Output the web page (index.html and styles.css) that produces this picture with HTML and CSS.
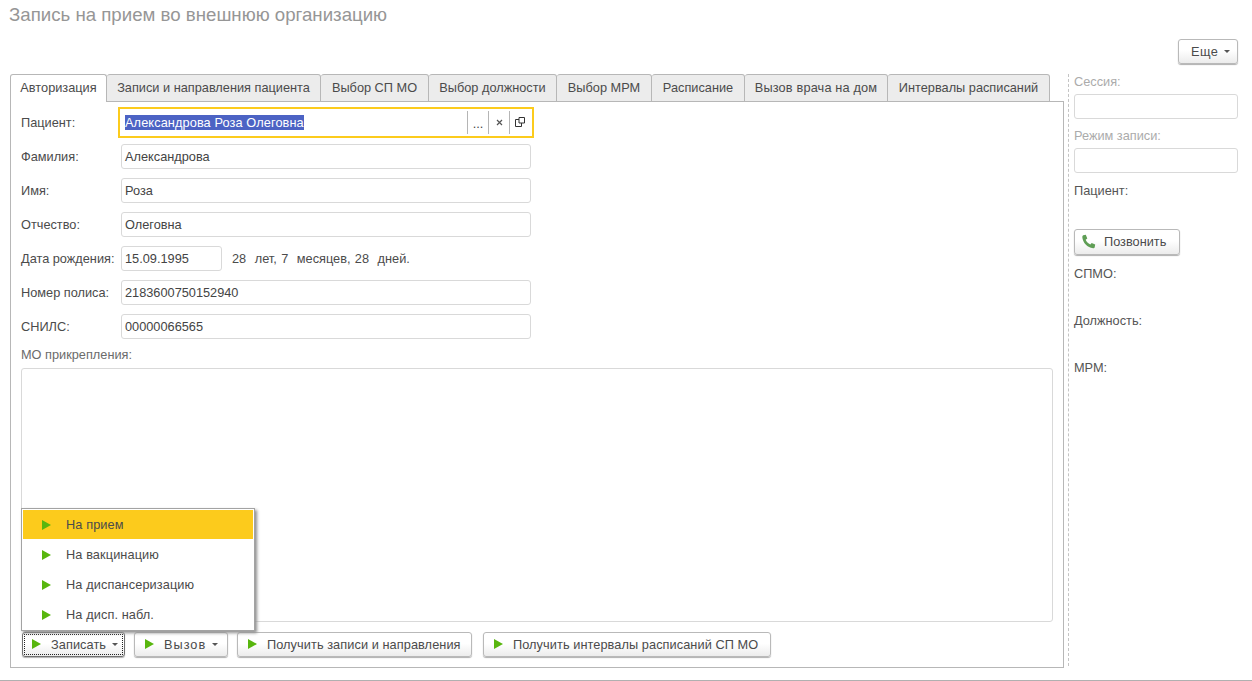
FILE: index.html
```html
<!DOCTYPE html>
<html lang="en">
<head>
    <meta charset="UTF-8">
    <meta name="viewport" content="width=device-width, initial-scale=1.0">
    <title>Запись на прием во внешнюю организацию</title>
    <link rel="stylesheet" href="styles.css">
</head>
<body>
    <div class="page">
        <h1 class="title">Запись на прием во внешнюю организацию</h1>
        <div class="topbar">
            <button class="btn more">Еще <span class="caret"></span></button>
        </div>
        <div class="main">
            <div class="left">
                <div class="tabs">
                    <div class="tab active">Авторизация</div>
                    <div class="tab">Записи и направления пациента</div>
                    <div class="tab">Выбор СП МО</div>
                    <div class="tab">Выбор должности</div>
                    <div class="tab">Выбор МРМ</div>
                    <div class="tab">Расписание</div>
                    <div class="tab">Вызов врача на дом</div>
                    <div class="tab">Интервалы расписаний</div>
                </div>
                <div class="panel">
                    <div class="row">
                        <label>Пациент:</label>
                        <div class="field focused">
                            <span class="selected">Александрова Роза Олеговна</span>
                            <div class="field-btns">
                                <span class="field-btn dots">...</span>
                                <span class="field-btn">
                                    <svg width="7" height="7" viewBox="0 0 7 7"><path d="M1 1l5 5M6 1L1 6" stroke="#555" stroke-width="1.2" fill="none"/></svg>
                                </span>
                                <span class="field-btn">
                                    <svg width="10" height="10" viewBox="0 0 10 10"><path d="M4 .5h5.500V6H4zM4 2.500H.5v7h6V6" stroke="#333" fill="none"/></svg>
                                </span>
                            </div>
                        </div>
                    </div>
                    <div class="row"><label>Фамилия:</label><div class="field">Александрова</div></div>
                    <div class="row"><label>Имя:</label><div class="field">Роза</div></div>
                    <div class="row"><label>Отчество:</label><div class="field">Олеговна</div></div>
                    <div class="row">
                        <label>Дата рождения:</label>
                        <div class="field date">15.09.1995</div>
                        <span class="age">28&nbsp; лет, 7&nbsp; месяцев, 28&nbsp; дней.</span>
                    </div>
                    <div class="row"><label>Номер полиса:</label><div class="field">2183600750152940</div></div>
                    <div class="row"><label>СНИЛС:</label><div class="field">00000066565</div></div>
                    <div class="mo-label">МО прикрепления:</div>
                    <div class="mo-box"></div>
                    <div class="actions">
                        <button class="btn focus-btn"><span class="inner"><span class="play"></span>Записать <span class="caret"></span></span></button>
                        <button class="btn call"><span class="play"></span>Вызов <span class="caret"></span></button>
                        <button class="btn get"><span class="play"></span>Получить записи и направления</button>
                        <button class="btn get2"><span class="play"></span>Получить интервалы расписаний СП МО</button>
                    </div>
                    <div class="popup">
                        <div class="popup-item current"><span class="play"></span>На прием</div>
                        <div class="popup-item"><span class="play"></span>На вакцинацию</div>
                        <div class="popup-item"><span class="play"></span>На диспансеризацию</div>
                        <div class="popup-item"><span class="play"></span>На дисп. набл.</div>
                    </div>
                </div>
            </div>
            <div class="side">
                <div class="side-label muted">Сессия:</div>
                <div class="field wide"></div>
                <div class="side-label muted second">Режим записи:</div>
                <div class="field wide"></div>
                <div class="side-label patient">Пациент:</div>
                <button class="btn phone">
                    <svg width="16" height="16" viewBox="0 0 16 16"><path d="M2.200 1.200L4.800.800l1.500 3.600-1.600 1.300c.800 2 2.400 3.600 4.600 4.800l1.400-1.500 3.500 1.600-.500 2.600c-.200.700-.800 1-1.600 1C6.500 13.900 1.600 8.500 1.300 3c0-.800.300-1.500.900-1.800z" fill="#5f9e55"/></svg>
                    Позвонить
                </button>
                <div class="side-label spmo">СПМО:</div>
                <div class="side-label next">Должность:</div>
                <div class="side-label next">МРМ:</div>
            </div>
        </div>
        <div class="bottom-line"></div>
    </div>
</body>
</html>
```

FILE: styles.css
```css
*{
    margin: 0px;
    padding: 0px;
    box-sizing: border-box;
}
html,body{
    height: 100%;
    overflow: hidden;
    background-color: white;
}
body{
    font-family: "Liberation Sans", Arial, sans-serif;
    font-size: 12.75px;
    color: #4b4b4b;
}
.page{
    height: 681px;
    display: flex;
    flex-direction: column;
}
.title{
    font-size: 18.67px;
    font-weight: normal;
    color: #969696;
    line-height: 18px;
    padding: 6px 0px 0px 9px;
}
.topbar{
    display: flex;
    justify-content: flex-end;
    padding: 15px 14px 0px 0px;
    height: 50px;
}
.main{
    display: flex;
    height: 606px;
}
.left{
    width: 1054px;
    margin-left: 10px;
    display: flex;
    flex-direction: column;
}
.tabs{
    display: flex;
    height: 28px;
    position: relative;
    z-index: 1;
}
.tab{
    flex: none;
    height: 28px;
    padding-top: 5px;
    text-align: center;
    line-height: 15px;
    background-color: #ececec;
    border: 1px solid #b7b7b7;
    border-left: none;
    border-radius: 3px 3px 0px 0px;
    white-space: nowrap;
}
.tab.active{
    background-color: white;
    border-left: 1px solid #b7b7b7;
    border-bottom: none;
}
.tab:nth-child(1){ width: 97px; }
.tab:nth-child(2){ width: 214px; }
.tab:nth-child(3){ width: 108px; }
.tab:nth-child(4){ width: 128px; }
.tab:nth-child(5){ width: 95px; }
.tab:nth-child(6){ width: 93px; }
.tab:nth-child(7){ width: 143px; letter-spacing: 0.15px; }
.tab:nth-child(8){ width: 162px; }
.panel{
    position: relative;
    height: 567px;
    margin-top: -1px;
    border: 1px solid #b7b7b7;
    padding: 8px 10px 0px 10px;
}
.row{
    display: flex;
    align-items: center;
    height: 25px;
    margin-bottom: 9px;
}
.row label{
    width: 100px;
    flex-shrink: 0;
}
.field{
    position: relative;
    width: 410px;
    height: 25px;
    border: 1px solid #d9d9d9;
    border-radius: 3px;
    padding-left: 3px;
    line-height: 23px;
    color: #444;
}
.field.focused{
    border: 2px solid #fccb1c;
    border-radius: 0px;
    outline: 1px solid white;
    width: 416px;
    height: 31px;
    margin-left: -3px;
    padding-left: 5px;
    line-height: 25px;
}
.selected{
    background-color: #4c63c4;
    color: white;
    display: inline-block;
    line-height: 15px;
    letter-spacing: 0.1px;
    vertical-align: middle;
}
.field-btns{
    position: absolute;
    right: 2px;
    top: 2px;
    bottom: 2px;
    display: flex;
}
.field-btn{
    width: 21px;
    border-left: 1px solid #b5b5b5;
    display: flex;
    align-items: center;
    justify-content: center;
}
.dots{
    line-height: 23px;
    padding-top: 2px;
}
.field.date{
    width: 101px;
}
.age{
    margin-left: 10px;
    word-spacing: 0.75px;
}
.field.wide{
    width: 164px;
}
.mo-label{
    color: #6b6b6b;
    line-height: 14px;
    margin-top: 1px;
}
.mo-box{
    height: 254px;
    margin-top: 6px;
    border: 1px solid #d9d9d9;
    border-radius: 3px;
    width: 1032px;
}
.actions{
    display: flex;
    margin-top: 10px;
    margin-left: 1px;
    letter-spacing: 0.07px;
}
.btn{
    font-family: inherit;
    font-size: 12.75px;
    letter-spacing: inherit;
    color: #4b4b4b;
    height: 25px;
    border: 1px solid #b9b9b9;
    border-radius: 3px;
    background: linear-gradient(#ffffff, #ffffff 45%, #ececec);
    box-shadow: 0px 1px 1px #b0b0b0;
    white-space: nowrap;
    display: flex;
    align-items: center;
}
.more{
    width: 60px;
    padding-left: 12px;
    letter-spacing: 0.4px;
}
.caret{
    display: inline-block;
    width: 0px;
    height: 0px;
    margin-left: 6px;
    border: 3px solid transparent;
    border-top-color: #555;
    border-bottom: none;
}
.play{
    display: inline-block;
    flex-shrink: 0;
    width: 0px;
    height: 0px;
    border-left: 9px solid #58b60e;
    border-top: 5px solid transparent;
    border-bottom: 5px solid transparent;
}
.actions .btn .play{
    margin-right: 10px;
}
.focus-btn{
    width: 103px;
    border-color: #707070;
    padding: 1px;
}
.focus-btn .inner{
    display: flex;
    align-items: center;
    width: 100%;
    height: 100%;
    padding-left: 7px;
    border: 1px dotted #222;
}
.call{
    width: 94px;
    margin-left: 9px;
    padding-left: 10px;
    letter-spacing: 1px;
}
.get{
    width: 235px;
    margin-left: 9px;
    padding-left: 10px;
}
.get2{
    width: 288px;
    margin-left: 11px;
    padding-left: 10px;
}
.popup{
    position: absolute;
    left: 10px;
    top: 406px;
    width: 234px;
    height: 123px;
    background-color: white;
    border: 1px solid #a3a3a3;
    padding: 1px;
    box-shadow: 2px 2px 3px #8f8f8f;
    letter-spacing: 0.1px;
}
.popup-item{
    display: flex;
    align-items: center;
    height: 30px;
    padding: 2px 0px 0px 19px;
}
.popup-item .play{
    margin-right: 15px;
}
.popup-item.current{
    background-color: #fccb1c;
    height: 29px;
    padding-top: 1px;
}
.side{
    width: 170px;
    margin-left: 4px;
    padding-left: 5px;
    border-left: 1px dashed #c4c4c4;
    height: 592px;
}
.side-label{
    line-height: 14px;
    color: #555;
}
.muted{
    color: #ababab;
    margin-bottom: 5px;
    padding-top: 1px;
}
.second{
    margin-top: 9px;
}
.patient{
    margin-top: 11px;
}
.phone{
    width: 106px;
    height: 26px;
    margin-top: 31px;
    padding-left: 6px;
}
.phone svg{
    margin-right: 7px;
}
.spmo{
    margin-top: 12px;
}
.next{
    margin-top: 33px;
}
.bottom-line{
    margin-top: 6px;
    height: 1px;
    background-color: #b0b0b0;
}
```
